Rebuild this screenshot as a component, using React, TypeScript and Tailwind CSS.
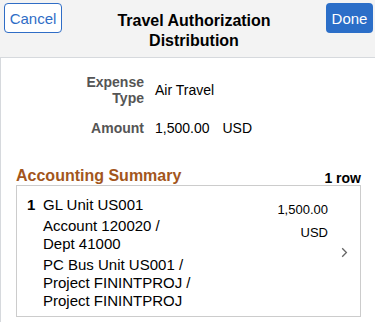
import React from "react";

export default function App() {
  return (
    <div className="w-[375px] h-[322px] bg-white overflow-hidden text-black" style={{ fontFamily: '"Liberation Sans", Arial, sans-serif' }}>
      <div className="h-[58px] bg-[#f3f3f3] border-b border-[#d6d9dd] flex items-start justify-between pl-[4px] pr-[2px] pt-[3px]">
        <button className="w-[58px] h-[30px] rounded-[4px] border border-[#2f6dc6] bg-white text-[#2f6dc6] text-[15px] leading-none flex items-center justify-center">
          Cancel
        </button>
        <div className="flex-1 text-center font-bold text-[16px] leading-[20px] pt-[8px] text-black">
          Travel Authorization
          <br />
          Distribution
        </div>
        <button className="w-[47px] h-[30px] rounded-[4px] bg-[#2b6ec8] text-white text-[15px] leading-none flex items-center justify-center">
          Done
        </button>
      </div>
      <div className="border-l border-[#d6d9dd] h-[264px]">
        <div className="pt-[16px] flex flex-col gap-[14px]">
          <div className="flex items-center">
            <div className="w-[143px] text-right font-bold text-[14px] leading-[16px] text-[#555555]">
              Expense
              <br />
              Type
            </div>
            <div className="pl-[11px] text-[14px] leading-[16px]">Air Travel</div>
          </div>
          <div className="flex items-center">
            <div className="w-[143px] text-right font-bold text-[14px] leading-[16px] text-[#555555]">Amount</div>
            <div className="pl-[11px] text-[14px] leading-[16px] flex gap-[13px]">
              <span>1,500.00</span>
              <span>USD</span>
            </div>
          </div>
        </div>
        <div className="mt-[30px] px-[15px] w-[376px]">
          <div className="flex items-end justify-between w-[345px]">
            <div className="font-bold text-[16px] leading-[20px] text-[#a3561c]">Accounting Summary</div>
            <div className="font-bold text-[14px] leading-[16px]">1 row</div>
          </div>
          <div className="mt-[-1px] w-[345px] h-[132px] border border-[#cccccc] flex pt-[10px]">
            <div className="w-[26px] pl-[10px] font-bold text-[15px] leading-[18px]">1</div>
            <div className="flex-1 text-[15px] leading-[18px] flex flex-col gap-[3px]">
              <div>GL Unit US001</div>
              <div>
                Account 120020 /
                <br />
                Dept 41000
              </div>
              <div>
                PC Bus Unit US001 /
                <br />
                Project FININTPROJ /
                <br />
                Project FININTPROJ
              </div>
            </div>
            <div className="flex flex-col items-end text-[13px] leading-[16px] pt-[6px] gap-[7px]">
              <div>1,500.00</div>
              <div>USD</div>
            </div>
            <div className="w-[32px] flex items-start justify-center pt-[51px]">
              <svg width="7" height="11" viewBox="0 0 7 11" fill="none">
                <path d="M1.2 1.2 L5.4 5.5 L1.2 9.8" stroke="#666666" strokeWidth="1.3" />
              </svg>
            </div>
          </div>
        </div>
      </div>
    </div>
  );
}
